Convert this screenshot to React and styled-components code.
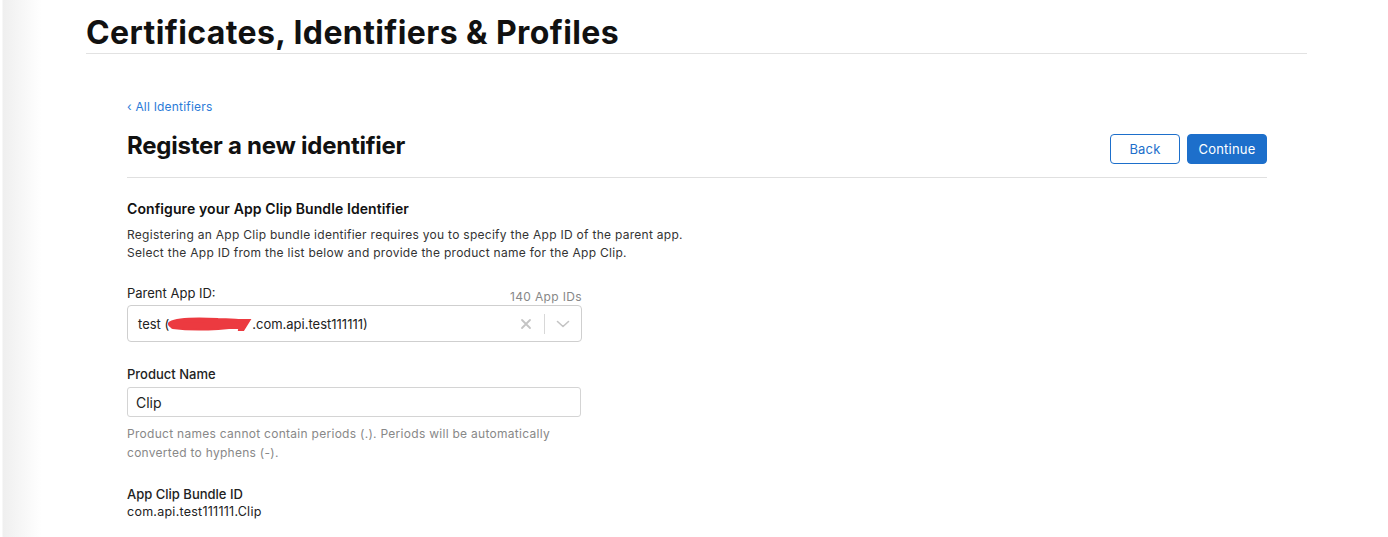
import React from "react";
import styled, { createGlobalStyle } from "styled-components";

const Global = createGlobalStyle`
  html, body { margin: 0; padding: 0; }
  body {
    background: linear-gradient(to right, #fff 0, #fff 2px, #efefef 3px, #f6f6f6 20px, #fff 42px);
    font-family: Inter, "Liberation Sans", Arial, sans-serif;
    color: #1d1d1f;
    min-height: 537px;
  }
`;

const Page = styled.div`
  width: 1221px;
  margin-left: 86px;
  padding-top: 14px;
`;

const Header = styled.header`
  border-bottom: 1px solid #e2e2e2;
  padding-bottom: 2px;
`;

const Title = styled.h1`
  margin: 0;
  font-size: 32px;
  font-weight: 700;
  line-height: 37px;
  letter-spacing: 0.4px;
  color: #111;
`;

const Content = styled.main`
  width: 1140px;
  margin-left: 41px;
  padding-top: 41px;
`;

const BackLink = styled.a`
  display: inline-block;
  font-size: 12px;
  line-height: 16px;
  letter-spacing: 0.2px;
  color: #2b7bd8;
  text-decoration: none;
`;

const TitleRow = styled.div`
  display: flex;
  align-items: center;
  justify-content: space-between;
  padding: 19px 0 13px;
  border-bottom: 1px solid #e0e0e0;
`;

const PageTitle = styled.h2`
  margin: -6px 0 0;
  font-size: 24px;
  font-weight: 700;
  line-height: 30px;
  color: #111;
  letter-spacing: -0.25px;
`;

const Buttons = styled.div`
  display: flex;
  gap: 7px;
`;

const Button = styled.button`
  height: 30px;
  width: ${(p) => p.$w}px;
  border-radius: 4px;
  font-family: inherit;
  font-size: 13px;
  letter-spacing: 0.2px;
  cursor: pointer;
  border: 1px solid #1d6fcb;
  background: ${(p) => (p.$primary ? "#1d6fcb" : "#fff")};
  color: ${(p) => (p.$primary ? "#fff" : "#1d6fcb")};
`;

const Section = styled.section`
  padding-top: 22px;
  width: 455px;
`;

const SectionTitle = styled.h3`
  margin: 0;
  font-size: 14px;
  font-weight: 600;
  line-height: 18px;
  letter-spacing: 0.1px;
  color: #111;
`;

const Desc = styled.p`
  margin: 8px 0 0;
  font-size: 12px;
  line-height: 18px;
  letter-spacing: 0.28px;
  color: #333;
  white-space: nowrap;
`;

const Field = styled.div`
  margin-top: ${(p) => p.$mt}px;
`;

const LabelRow = styled.div`
  display: flex;
  justify-content: space-between;
  align-items: flex-end;
`;

const Label = styled.label`
  font-size: 13px;
  font-weight: ${(p) => p.$weight || 500};
  line-height: 18px;
  color: #222;
`;

const Count = styled.span`
  font-size: 12px;
  color: #888;
  line-height: 16px;
  letter-spacing: 0.35px;
  margin-bottom: -3px;
`;

const SelectBox = styled.div`
  margin-top: 3px;
  height: 37px;
  box-sizing: border-box;
  border: 1px solid #cfcfcf;
  border-radius: 4px;
  display: flex;
  align-items: center;
  padding-left: 10px;
`;

const SelectValue = styled.div`
  flex: 1;
  font-size: 13px;
  color: #222;
  display: flex;
  align-items: center;
  white-space: nowrap;
`;

const Indicators = styled.div`
  display: flex;
  align-items: center;
  height: 100%;
`;

const IconSlot = styled.div`
  width: 36px;
  display: flex;
  justify-content: center;
  align-items: center;
  color: #c4c4c4;
`;

const Sep = styled.div`
  width: 1px;
  height: 20px;
  background: #d8d8d8;
`;

const TextInput = styled.input`
  display: block;
  margin-top: 4px;
  width: 454px;
  height: 30px;
  box-sizing: border-box;
  border: 1px solid #d4d4d4;
  border-radius: 3px;
  padding: 0 8px;
  font-family: inherit;
  font-size: 14px;
  color: #222;
  outline: none;
`;

const Help = styled.p`
  margin: 7px 0 0;
  font-size: 12px;
  line-height: 19px;
  letter-spacing: 0.28px;
  color: #888;
`;

const Value = styled.div`
  font-size: 12.5px;
  line-height: 16px;
  letter-spacing: 0.25px;
  color: #222;
  margin-top: 1px;
`;

function Scribble() {
  return (
    <svg width="84" height="14" viewBox="0 0 84 14" style={{ margin: "0 0 0 -1px" }}>
      <path
        d="M3 7 C 10 3, 30 3, 50 4 C 62 4, 70 5, 76 5 L 78 5 L 73 13 M 5 9 C 20 11, 45 11, 72 8"
        stroke="#ec3a40"
        strokeWidth="6"
        strokeLinecap="round"
        fill="none"
      />
      <path d="M4 6 C 20 6, 60 5, 77 6 L 74 12 C 50 12, 20 12, 4 9 Z" fill="#ec3a40" />
    </svg>
  );
}

export default function App() {
  return (
    <>
      <Global />
      <Page>
        <Header>
          <Title>Certificates, Identifiers &amp; Profiles</Title>
        </Header>
        <Content>
          <BackLink href="#">‹ All Identifiers</BackLink>
          <TitleRow>
            <PageTitle>Register a new identifier</PageTitle>
            <Buttons>
              <Button $w={70}>Back</Button>
              <Button $w={80} $primary>Continue</Button>
            </Buttons>
          </TitleRow>
          <Section>
            <SectionTitle>Configure your App Clip Bundle Identifier</SectionTitle>
            <Desc>
              Registering an App Clip bundle identifier requires you to specify the App ID of the parent app.
              <br />
              Select the App ID from the list below and provide the product name for the App Clip.
            </Desc>
            <Field $mt={22}>
              <LabelRow>
                <Label $weight={400}>Parent App ID:</Label>
                <Count>140 App IDs</Count>
              </LabelRow>
              <SelectBox>
                <SelectValue>
                  test (<Scribble />.com.api.test111111)
                </SelectValue>
                <Indicators>
                  <IconSlot>
                    <svg width="12" height="12" viewBox="0 0 12 12">
                      <path d="M2 2 L10 10 M10 2 L2 10" stroke="currentColor" strokeWidth="1.8" strokeLinecap="round" />
                    </svg>
                  </IconSlot>
                  <Sep />
                  <IconSlot>
                    <svg width="14" height="8" viewBox="0 0 14 8">
                      <path d="M1.5 1.5 L7 6.5 L12.5 1.5" stroke="currentColor" strokeWidth="1.6" fill="none" strokeLinecap="round" strokeLinejoin="round" />
                    </svg>
                  </IconSlot>
                </Indicators>
              </SelectBox>
            </Field>
            <Field $mt={21}>
              <Label>Product Name</Label>
              <TextInput defaultValue="Clip" />
              <Help>
                Product names cannot contain periods (.). Periods will be automatically
                <br />
                converted to hyphens (-).
              </Help>
            </Field>
            <Field $mt={21}>
              <Label>App Clip Bundle ID</Label>
              <Value>com.api.test111111.Clip</Value>
            </Field>
          </Section>
        </Content>
      </Page>
    </>
  );
}
